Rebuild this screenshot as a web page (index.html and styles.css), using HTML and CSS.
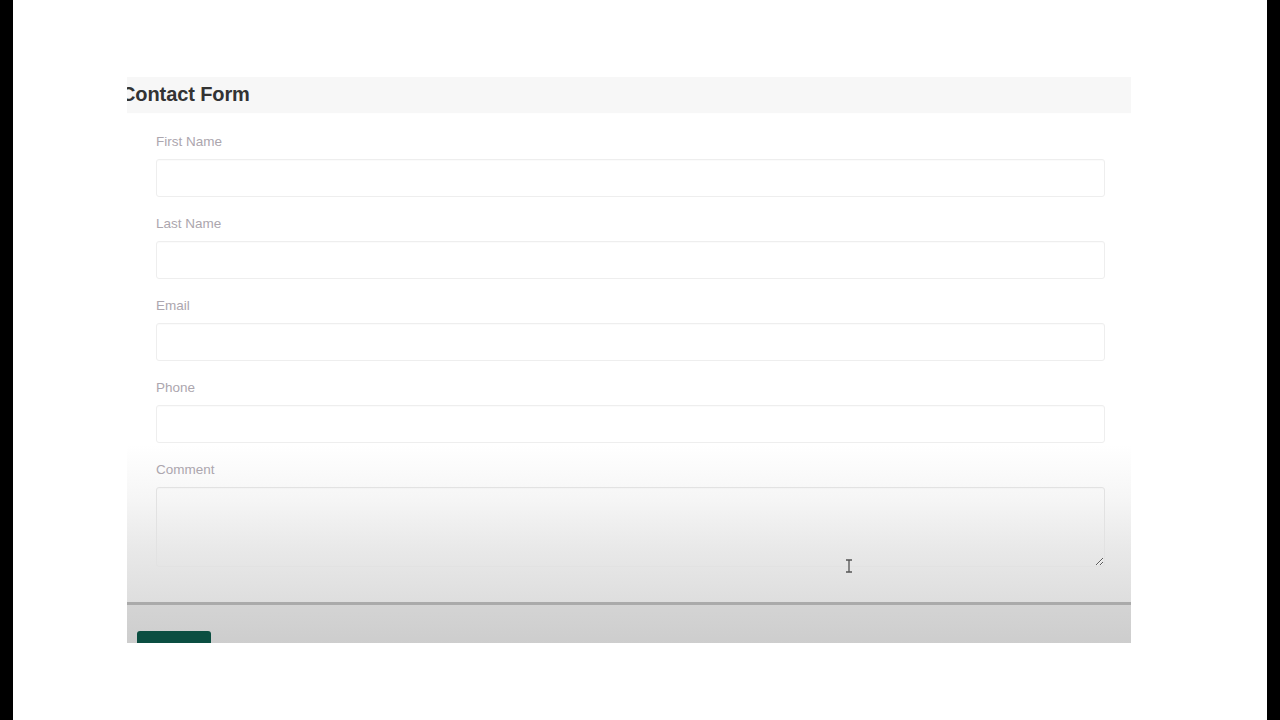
FILE: index.html
```html
<!DOCTYPE html>
<html lang="en">
<head>
<meta charset="utf-8">
<title>Contact Form</title>
<link rel="stylesheet" href="styles.css">
</head>
<body>
<div class="bar"></div>
<main class="stage">
  <section class="card">
    <header class="card-head"><h2 class="title">Contact Form</h2></header>
    <form class="card-body">
      <div class="field"><label class="label">First Name</label><input class="input" type="text"></div>
      <div class="field"><label class="label">Last Name</label><input class="input" type="text"></div>
      <div class="field"><label class="label">Email</label><input class="input" type="text"></div>
      <div class="field"><label class="label">Phone</label><input class="input" type="text"></div>
      <div class="field"><label class="label">Comment</label><textarea class="input area"></textarea></div>
    </form>
    <footer class="card-foot"><button class="btn" type="button" aria-label="Submit"></button></footer>
    <svg class="cursor" width="8" height="14" viewBox="0 0 8 14"><path d="M1 1h6M4 1v12M1 13h6" stroke="#555" stroke-width="1.3" fill="none"/></svg>
  </section>
</main>
<div class="bar"></div>
</body>
</html>
```

FILE: styles.css
```css
html, body {
  margin: 0;
  height: 720px;
  overflow: hidden;
}
body {
  display: flex;
  font-family: "Liberation Sans", Arial, sans-serif;
  background: #fff;
}
.bar {
  width: 13px;
  flex: none;
  background: #000;
}
.stage {
  flex: 1;
  background: #fff;
  padding: 77px 0 0 114px;
}
.card {
  position: relative;
  width: 1004px;
  height: 566px;
  overflow: hidden;
  display: flex;
  flex-direction: column;
  background: linear-gradient(to bottom, #ffffff 0px, #ffffff 368px, #f6f6f6 420px, #e9e9e9 470px, #dedede 525px);
}
.card-head {
  height: 35px;
  flex: none;
  background: #f7f7f7;
  box-shadow: 0 1px 1px rgba(0,0,0,0.03);
  display: flex;
  align-items: center;
}
.title {
  margin: 0 0 0 -6px;
  font-size: 20px;
  font-weight: bold;
  color: #333333;
  letter-spacing: -0.1px;
}
.card-body {
  padding: 21px 26px 35px 29px;
  display: flex;
  flex-direction: column;
  gap: 18px;
}
.field {
  display: flex;
  flex-direction: column;
}
.label {
  font-size: 13.5px;
  line-height: 17px;
  height: 17px;
  color: #aca6ae;
  margin-bottom: 9px;
}
.input {
  height: 38px;
  box-sizing: border-box;
  border: 1px solid #eeeeee;
  border-radius: 3px;
  background: transparent;
  box-shadow: inset 0 1px 1px rgba(0,0,0,0.02);
  font: inherit;
  margin: 0;
  outline: none;
}
.area {
  height: 80px;
  resize: vertical;
  border-color: #e2e2e2;
}
.card-foot {
  flex: 1;
  border-top: 3px solid #aaaaaa;
  background: linear-gradient(to bottom, #d4d4d4, #c9c9c9);
  padding: 26px 0 0 10px;
}
.btn {
  display: block;
  width: 74px;
  height: 36px;
  border: none;
  border-radius: 3px;
  background: #0b4e41;
  padding: 0;
}
.cursor {
  position: absolute;
  left: 718px;
  top: 482px;
}
```
